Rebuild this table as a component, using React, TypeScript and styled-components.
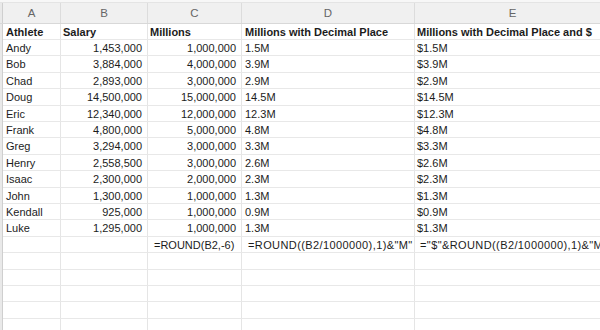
import React from 'react';
import styled, { createGlobalStyle } from 'styled-components';

const GlobalStyle = createGlobalStyle`
  html, body {
    margin: 0;
    padding: 0;
    background: #ffffff;
    overflow: hidden;
  }
  body {
    font-family: 'Liberation Sans', Arial, sans-serif;
  }
`;

// 列宽（含左侧行号边条）
const COLUMNS = ['A', 'B', 'C', 'D', 'E'];
const COL_TEMPLATE = '3px 58px 87px 94px 173px 196px';
const ROW_HEIGHT = 16.4;

interface Athlete {
  name: string;
  salary: string;
  millions: string;
  short: string;
  dollar: string;
}

const athletes: Athlete[] = [
  { name: 'Andy', salary: '1,453,000', millions: '1,000,000', short: '1.5M', dollar: '$1.5M' },
  { name: 'Bob', salary: '3,884,000', millions: '4,000,000', short: '3.9M', dollar: '$3.9M' },
  { name: 'Chad', salary: '2,893,000', millions: '3,000,000', short: '2.9M', dollar: '$2.9M' },
  { name: 'Doug', salary: '14,500,000', millions: '15,000,000', short: '14.5M', dollar: '$14.5M' },
  { name: 'Eric', salary: '12,340,000', millions: '12,000,000', short: '12.3M', dollar: '$12.3M' },
  { name: 'Frank', salary: '4,800,000', millions: '5,000,000', short: '4.8M', dollar: '$4.8M' },
  { name: 'Greg', salary: '3,294,000', millions: '3,000,000', short: '3.3M', dollar: '$3.3M' },
  { name: 'Henry', salary: '2,558,500', millions: '3,000,000', short: '2.6M', dollar: '$2.6M' },
  { name: 'Isaac', salary: '2,300,000', millions: '2,000,000', short: '2.3M', dollar: '$2.3M' },
  { name: 'John', salary: '1,300,000', millions: '1,000,000', short: '1.3M', dollar: '$1.3M' },
  { name: 'Kendall', salary: '925,000', millions: '1,000,000', short: '0.9M', dollar: '$0.9M' },
  { name: 'Luke', salary: '1,295,000', millions: '1,000,000', short: '1.3M', dollar: '$1.3M' },
];

const Sheet = styled.div`
  width: 600px;
  height: 330px;
  overflow: hidden;
  display: flex;
  flex-direction: column;
  background: #ffffff;
`;

const TopStrip = styled.div`
  height: 3px;
  flex: 0 0 3px;
  background: #f7f7f7;
  border-bottom: 1px solid #e4e4e4;
  box-sizing: border-box;
`;

const Grid = styled.div`
  display: grid;
  grid-template-columns: ${COL_TEMPLATE};
  grid-auto-rows: ${ROW_HEIGHT}px;
  width: 611px;
`;

const HeaderGrid = styled(Grid)`
  grid-auto-rows: 19.7px;
  background: #f0f0f0;
  border-bottom: 1px solid #d8d8d8;
`;

const Gutter = styled.div`
  background: #e9e9e9;
  border-right: 1px solid #cfcfcf;
  box-sizing: border-box;
`;

const ColHeader = styled.div`
  display: flex;
  align-items: center;
  justify-content: center;
  font-size: 11.5px;
  color: #666666;
  border-right: 1px solid #dcdcdc;
  box-sizing: border-box;
  padding-top: 1px;
`;

const Cell = styled.div<{ $align?: 'left' | 'right'; $bold?: boolean; $indent?: number }>`
  box-sizing: border-box;
  border-right: 1px solid #e5e5e5;
  border-bottom: 1px solid #e8e8e8;
  font-size: 11px;
  line-height: ${ROW_HEIGHT}px;
  color: #1c1c1c;
  font-weight: ${(p) => (p.$bold ? 700 : 400)};
  text-align: ${(p) => p.$align || 'left'};
  padding: ${(p) => (p.$align === 'right' ? '0 5px 0 0' : `0 0 0 ${p.$indent ?? 3}px`)};
  white-space: nowrap;
  overflow: visible;
`;

// 公式说明行，文字比数值略宽
const FormulaCell = styled(Cell)<{ $wide?: boolean }>`
  letter-spacing: ${(p) => (p.$wide ? '0.4px' : '0')};
`;

const Row: React.FC<{ children: React.ReactNode }> = ({ children }) => (
  <>
    <Gutter />
    {children}
  </>
);

const App: React.FC = () => {
  const blankRows = Array.from({ length: 6 });
  return (
    <>
      <GlobalStyle />
      <Sheet>
        <TopStrip />
        <HeaderGrid>
          <Gutter />
          {COLUMNS.map((c) => (
            <ColHeader key={c}>{c}</ColHeader>
          ))}
        </HeaderGrid>
        <Grid>
          <Row>
            <Cell $bold>Athlete</Cell>
            <Cell $bold $indent={2}>Salary</Cell>
            <Cell $bold $indent={2}>Millions</Cell>
            <Cell $bold $indent={3}>Millions with Decimal Place</Cell>
            <Cell $bold $indent={2}>Millions with Decimal Place and $</Cell>
          </Row>
          {athletes.map((a) => (
            <Row key={a.name}>
              <Cell>{a.name}</Cell>
              <Cell $align="right">{a.salary}</Cell>
              <Cell $align="right">{a.millions}</Cell>
              <Cell $indent={3}>{a.short}</Cell>
              <Cell $indent={2}>{a.dollar}</Cell>
            </Row>
          ))}
          <Row>
            <Cell />
            <Cell />
            <FormulaCell $indent={6}>=ROUND(B2,-6)</FormulaCell>
            <FormulaCell $indent={6} $wide>=ROUND((B2/1000000),1)&amp;"M"</FormulaCell>
            <FormulaCell $indent={5} $wide>="$"&amp;ROUND((B2/1000000),1)&amp;"M"</FormulaCell>
          </Row>
          {blankRows.map((_, i) => (
            <Row key={i}>
              <Cell />
              <Cell />
              <Cell />
              <Cell />
              <Cell />
            </Row>
          ))}
        </Grid>
      </Sheet>
    </>
  );
};

export default App;
